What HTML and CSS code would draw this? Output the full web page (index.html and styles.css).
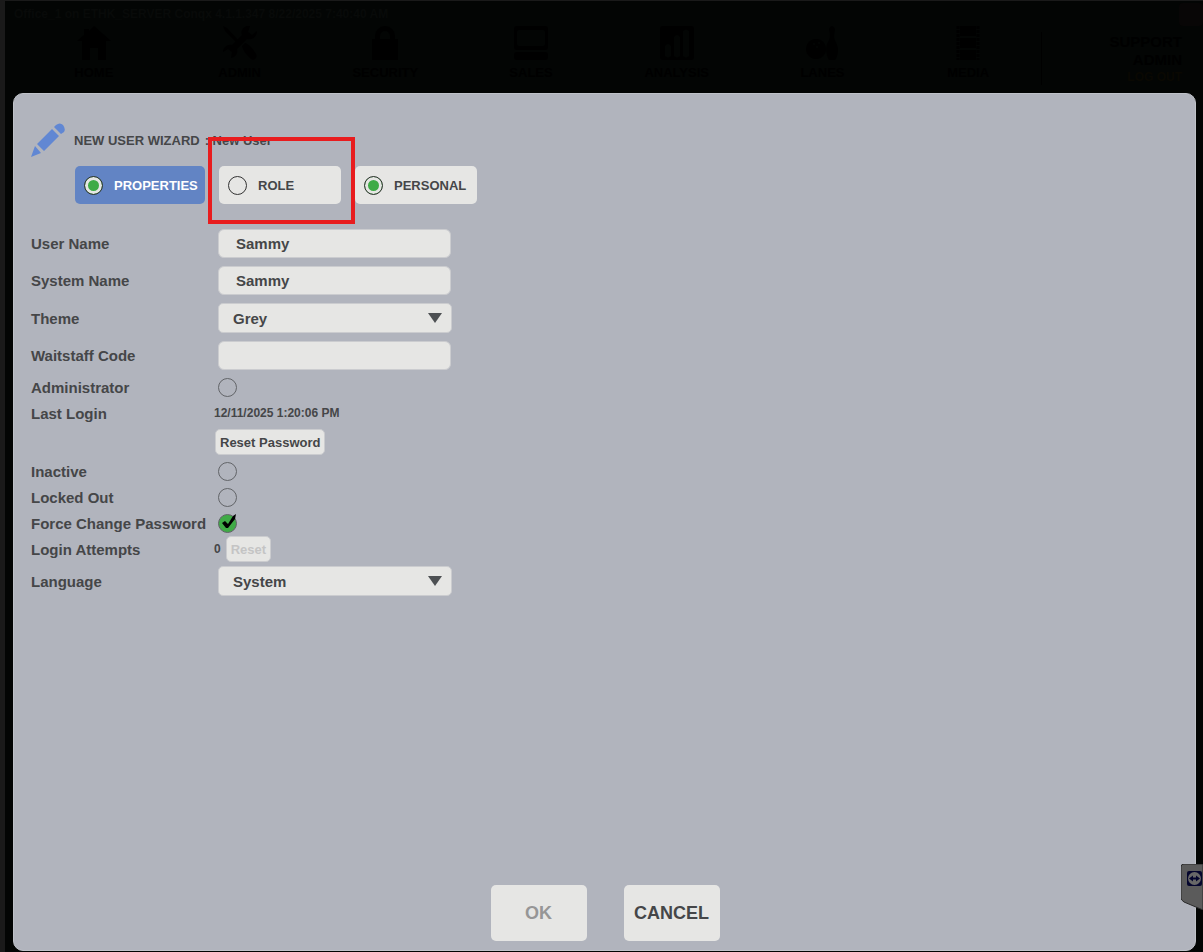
FILE: index.html
```
<!DOCTYPE html>
<html lang="en">
<head>
    <meta charset="UTF-8">
    <meta name="viewport" content="width=device-width, initial-scale=1.0">
    <title>New User Wizard</title>
    <link rel="stylesheet" href="styles.css">
</head>
<body>
    <div class="app">
        <header class="topbar">
            <div class="titlebar">
                <span>Office_1 on ETHK_SERVER Conqx 4.1.1.347 8/22/2025 7:40:40 AM</span>
                <button class="minimize" aria-label="Minimize"></button>
            </div>
            <div class="menu">
                <nav class="nav">
                    <a href="#">
                        <svg viewBox="0 0 34 34"><path d="M17 0 34 15h-5v19h-8V22h-8v12H5V15H0L7 9V3h5v2z"/></svg>
                        HOME
                    </a>
                    <a href="#">
                        <svg viewBox="0 0 34 34"><path d="m0 0 4 2 11 12-2 2L2 5zM19 20l3-3c4 1 8 6 11 11 2 4-2 7-5 5-4-4-8-8-9-13z"/><path d="M27 0c-6-1-10 5-8 9L9 19c-4-1-9 2-9 7l5-3 4 3-1 6c5-1 7-5 6-9l10-10c5 1 10-2 10-8l-5 4-4-3z"/></svg>
                        ADMIN
                    </a>
                    <a href="#">
                        <svg viewBox="0 0 34 34"><path d="M4 13h3v-3a10 10 0 0 1 20 0v3h3v21H4zm8 0h10v-3a5 5 0 0 0-10 0z"/></svg>
                        SECURITY
                    </a>
                    <a href="#">
                        <svg viewBox="0 0 34 34"><path fill-rule="evenodd" d="M3 0h28q3 0 3 3v18q0 3-3 3H3q-3 0-3-3V3q0-3 3-3zm2 4Q3 4 3 6v12q0 2 2 2h24q2 0 2-2V6q0-2-2-2z"/><rect y="26" width="34" height="8" rx="3"/></svg>
                        SALES
                    </a>
                    <a href="#">
                        <svg viewBox="0 0 34 34"><path fill-rule="evenodd" d="M3 0h28q3 0 3 3v28q0 3-3 3H3q-3 0-3-3V3q0-3 3-3zm2 20v10q3 3 6 0V20q-3-4-6 0zm9-9v19q3 3 6 0V11q-3-4-6 0zm9-6v25q3 3 6 0V5q-3-3-6 0z"/></svg>
                        ANALYSIS
                    </a>
                    <a href="#">
                        <svg viewBox="0 0 34 34"><path fill-rule="evenodd" d="M11 13a10 10 0 1 0 .1 0zM9 17a1 1 0 1 0 .1 0zm5-1a1 1 0 1 0 .1 0zm-2 4a1 1 0 1 0 .1 0z"/><path d="M24 3q3-6 6 0l-1 7c0 5 4 8 4 14 0 5-2 9-3 10h-6c-3-5-4-13-1-18 2-3 2-6 2-8z"/></svg>
                        LANES
                    </a>
                    <a href="#">
                        <svg viewBox="0 0 34 34"><path d="M9 0h16v10H9zM9 12h16v10H9zM9 24h16v10H9z"/><path d="M7 0v34M27 0v34" stroke="#000" stroke-width="3" stroke-dasharray="3 1"/></svg>
                        MEDIA
                    </a>
                </nav>
                <div class="account">
                    <span>SUPPORT</span>
                    <span>ADMIN</span>
                    <a href="#">LOG OUT</a>
                </div>
            </div>
        </header>

        <main class="wizard">
            <div class="wizard-head">
                <svg class="pencil" viewBox="0 0 34 34"><path d="m0 34 4-11 6 7zM6 21 21 6l7 7-15 15zM23 4l2-2q4-3 7 0 3 4 1 7l-3 2z"/></svg>
                <h1>NEW USER WIZARD</h1>
                <span>: New User</span>
            </div>

            <div class="steps">
                <button class="step active"><i class="dot done"></i>PROPERTIES</button>
                <div class="step-marked">
                    <button class="step"><i class="dot"></i>ROLE</button>
                    <div class="highlight"></div>
                </div>
                <button class="step"><i class="dot done"></i>PERSONAL</button>
            </div>

            <form class="form">
                <div class="row row-text">
                    <label for="userName">User Name</label>
                    <input class="text" type="text" id="userName" value="Sammy">
                </div>
                <div class="row row-text">
                    <label for="systemName">System Name</label>
                    <input class="text" type="text" id="systemName" value="Sammy">
                </div>
                <div class="row row-select">
                    <label for="theme">Theme</label>
                    <div class="select">
                        <select id="theme"><option>Grey</option></select>
                        <svg viewBox="0 0 14 10"><path d="M0 0h14L7 10z"/></svg>
                    </div>
                </div>
                <div class="row row-text">
                    <label for="waitstaff">Waitstaff Code</label>
                    <input class="text" type="text" id="waitstaff">
                </div>
                <div class="row">
                    <label for="administrator">Administrator</label>
                    <input class="check" type="checkbox" id="administrator">
                </div>
                <div class="row">
                    <span class="label">Last Login</span>
                    <span class="value">12/11/2025 1:20:06 PM</span>
                </div>
                <div class="row row-button">
                    <button class="small" type="button">Reset Password</button>
                </div>
                <div class="row">
                    <label for="inactive">Inactive</label>
                    <input class="check" type="checkbox" id="inactive">
                </div>
                <div class="row">
                    <label for="lockedOut">Locked Out</label>
                    <input class="check" type="checkbox" id="lockedOut">
                </div>
                <div class="row">
                    <label for="forceChange">Force Change Password</label>
                    <div class="checked">
                        <input class="check" type="checkbox" id="forceChange" checked>
                        <svg viewBox="0 0 19 19"><path d="M4 9l3-2 3 3 5-8 3-2-1 5-7 9H8z"/></svg>
                    </div>
                </div>
                <div class="row">
                    <span class="label">Login Attempts</span>
                    <span class="value">0</span>
                    <button class="small attempts" type="button" disabled>Reset</button>
                </div>
                <div class="row row-select">
                    <label for="language">Language</label>
                    <div class="select">
                        <select id="language"><option>System</option></select>
                        <svg viewBox="0 0 14 10"><path d="M0 0h14L7 10z"/></svg>
                    </div>
                </div>
            </form>

            <footer class="actions">
                <button disabled>OK</button>
                <button>CANCEL</button>
            </footer>
        </main>

        <!-- remote session tab on the window edge -->
        <div class="remote">
            <svg viewBox="0 0 22 46">
                <path d="M3 0H22V46L3 38Q0 36 0 34V3Q0 0 3 0z" fill="#5b5b5b" stroke="#2b2b2b"/>
                <rect x="6" y="7" width="15" height="15" rx="2" fill="#05062e"/>
                <circle cx="13.500" cy="14.500" r="6.500" fill="#686868"/>
                <path d="m8 14.500 4-3v2h3v-2l4 3-4 3v-2h-3v2z" fill="#05062e"/>
            </svg>
        </div>
    </div>
</body>
</html>
```
FILE: styles.css
```
* {
    box-sizing: border-box;
}
body {
    margin: 0;
    background-color: #1a1a1a;
    color: #454648;
    font-family: "Liberation Sans", Arial, sans-serif;
    font-weight: bold;
}
button, input, select {
    font: inherit;
    color: inherit;
    border: none;
    margin: 0;
    padding: 0;
}
svg {
    display: block;
}
.app {
    position: relative;
    display: flex;
    flex-direction: column;
    min-height: 100vh;
    margin-left: 5px;
    padding: 0 7px 1px 8px;
    border-top: 1px solid #1a1a1a;
    background-color: #030504;
}

/* dimmed main window behind the wizard */
.topbar {
    height: 92px;
    color: #000;
}
.titlebar {
    display: flex;
    justify-content: space-between;
    height: 25px;
    margin-right: -7px;
    padding-top: 2px;
    color: #080a09;
    font-size: 12px;
    line-height: 22px;
}
.titlebar span {
    padding-left: 1px;
}
.minimize {
    width: 24px;
    height: 23px;
    border-radius: 4px;
    background-color: #080606;
}
.menu {
    display: flex;
}
.nav {
    display: flex;
    flex: 1;
    padding-left: 8px;
}
.nav a {
    display: flex;
    flex: 1;
    flex-direction: column;
    align-items: center;
    gap: 5px;
    color: #000;
    font-size: 13px;
    line-height: 16px;
    text-decoration: none;
}
.nav svg {
    width: 34px;
    height: 34px;
}
.account {
    display: flex;
    flex-direction: column;
    align-items: flex-end;
    width: 155px;
    margin-top: 6px;
    padding: 1px 14px 0 0;
    border-left: 1px solid #000;
    font-size: 15px;
    line-height: 18px;
}
.account a {
    color: #0a0802;
    font-size: 12px;
    line-height: 16px;
    text-decoration: none;
}

/* wizard */
.wizard {
    display: flex;
    flex: 1;
    flex-direction: column;
    padding: 29px 16px 9px 17px;
    border: 1px solid #bfc2c8;
    border-radius: 10px;
    background-color: #b1b4bd;
}
.wizard-head {
    display: flex;
    align-items: center;
    font-size: 13px;
}
.wizard-head h1 {
    margin: 0 5px 0 9px;
    font-size: inherit;
}
.pencil {
    width: 34px;
    height: 34px;
    fill: #6187d3;
}
.steps {
    display: flex;
    gap: 14px;
    margin: 9px 0 21px 44px;
}
.step {
    display: flex;
    align-items: center;
    gap: 11px;
    min-width: 122px;
    height: 38px;
    padding: 0 6px 0 9px;
    border-radius: 5px;
    background-color: #e6e6e4;
    font-size: 13px;
}
.step.active {
    min-width: 130px;
    background-color: #6284c4;
    color: #fff;
}
.dot {
    width: 19px;
    height: 19px;
    border: 1px solid #333;
    border-radius: 50%;
    background-color: #e6e6e4;
}
.dot.done {
    padding: 3px;
    background-color: #3fab46;
    box-shadow: inset 0 0 0 3px #e6e6e4;
}
.step-marked {
    position: relative;
}
.highlight {
    position: absolute;
    inset: -29px -14px -20px -11px;
    border: 4px solid #e81c1e;
    pointer-events: none;
}

.row {
    display: flex;
    align-items: center;
    height: 26px;
    font-size: 15px;
}
.row-text {
    height: 37px;
}
.row-select {
    height: 38px;
}
.row-button {
    height: 32px;
    padding-left: 184px;
}
.row label {
    width: 187px;
}
.label {
    width: 183px;
}
.value {
    font-size: 12px;
}
.text {
    width: 233px;
    height: 29px;
    padding: 0 17px;
    border: 1px solid #cbcccf;
    border-radius: 6px;
    background-color: #e6e6e4;
}
.select {
    display: grid;
    align-items: center;
    width: 234px;
}
.select select, .select svg, .checked .check, .checked svg {
    grid-area: 1 / 1;
}
.select select {
    height: 30px;
    padding-left: 14px;
    border: 1px solid #cbcccf;
    border-radius: 5px;
    background-color: #e6e6e4;
    appearance: none;
}
.select svg {
    justify-self: end;
    width: 14px;
    height: 10px;
    margin-right: 10px;
    fill: #4d5053;
    pointer-events: none;
}
.check {
    width: 19px;
    height: 19px;
    border: 1px solid #626468;
    border-radius: 50%;
    appearance: none;
}
.check:checked {
    background-color: #3fab46;
}
.checked {
    display: grid;
}
.checked svg {
    width: 19px;
    height: 19px;
    pointer-events: none;
}
.small {
    height: 26px;
    padding: 0 4px;
    border: 1px solid #cbcccf;
    border-radius: 5px;
    background-color: #e6e6e4;
    font-size: 13px;
}
.small:disabled {
    color: #c4c4c4;
}
.attempts {
    margin-left: 5px;
}

.actions {
    display: flex;
    justify-content: center;
    gap: 37px;
    margin-top: auto;
}
.actions button {
    width: 96px;
    height: 56px;
    border-radius: 5px;
    background-color: #e6e6e4;
    font-size: 18px;
}
.actions button:disabled {
    color: #969696;
}

.remote {
    position: absolute;
    right: 0;
    top: 863px;
    width: 22px;
}
```
